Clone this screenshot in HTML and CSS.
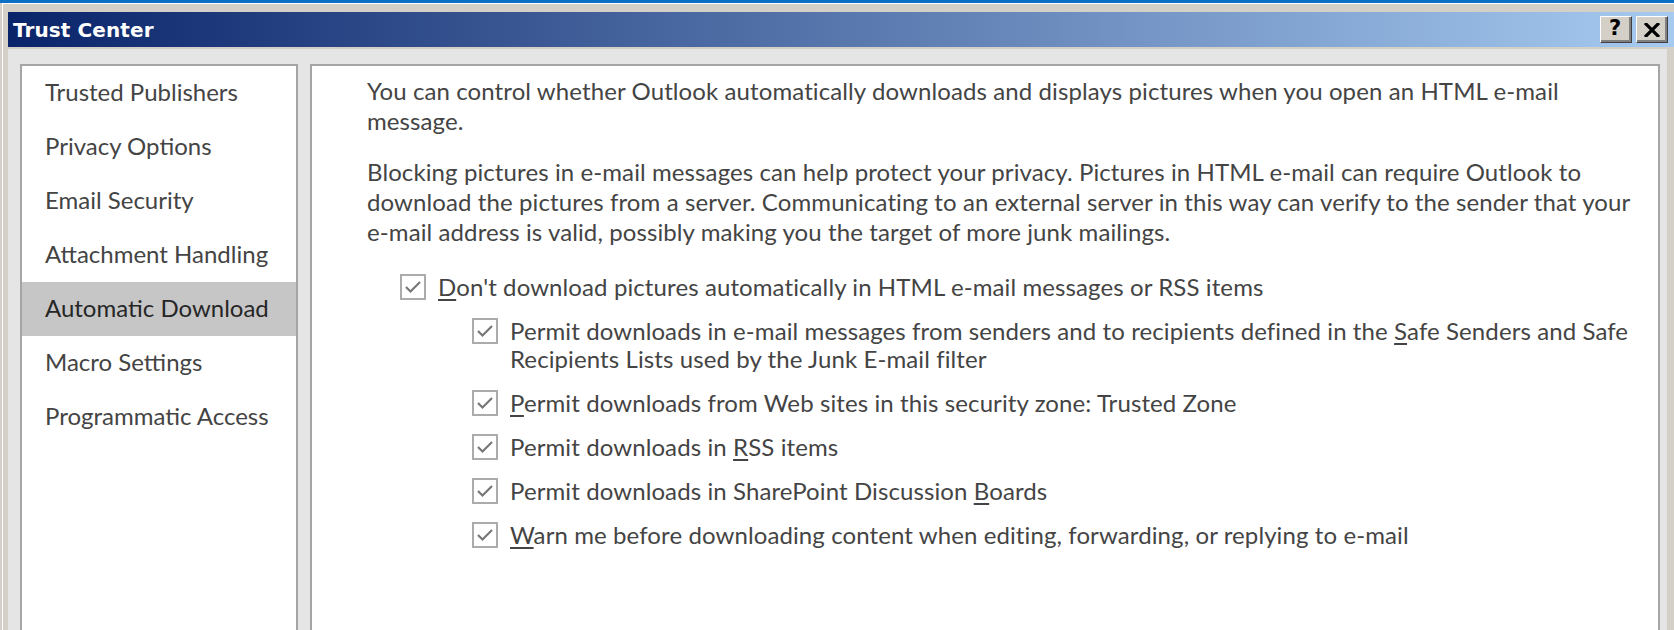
FILE: index.html
```html
<!DOCTYPE html>
<html lang="en">
<head>
    <meta charset="UTF-8">
    <meta name="viewport" content="width=device-width, initial-scale=1.0">
    <title>Trust Center</title>
    <link rel="stylesheet" href="styles.css">
</head>
<body>

    <div class="desktop-strip"></div>

    <div class="window">
        <div class="title-bar">
            <span class="title">Trust Center</span>
            <div class="caption-buttons">
                <button class="caption-btn" type="button" title="Help">
                    <span class="help-glyph">?</span>
                </button>
                <button class="caption-btn" type="button" title="Close">
                    <svg width="16" height="14" viewBox="0 0 16 14">
                        <path d="M1 0 L15 14 M15 0 L1 14" stroke="#000" stroke-width="3.2" fill="none"/>
                    </svg>
                </button>
            </div>
        </div>

        <div class="dialog">
            <ul class="nav">
                <li>Trusted Publishers</li>
                <li>Privacy Options</li>
                <li>Email Security</li>
                <li>Attachment Handling</li>
                <li class="selected">Automatic Download</li>
                <li>Macro Settings</li>
                <li>Programmatic Access</li>
            </ul>

            <div class="content">
                <p>You can control whether Outlook automatically downloads and displays pictures when you open an HTML e-mail message.</p>
                <p class="last">Blocking pictures in e-mail messages can help protect your privacy. Pictures in HTML e-mail can require Outlook to download the pictures from a server. Communicating to an external server in this way can verify to the sender that your e-mail address is valid, possibly making you the target of more junk mailings.</p>

                <div class="option">
                    <span class="checkbox"><svg width="22" height="22" viewBox="0 0 22 22"><path d="M4 11 L8.5 15.5 L18 6" stroke="#777" stroke-width="2.2" fill="none"/></svg></span>
                    <span class="label"><u>D</u>on't download pictures automatically in HTML e-mail messages or RSS items</span>
                </div>
                <div class="option sub">
                    <span class="checkbox"><svg width="22" height="22" viewBox="0 0 22 22"><path d="M4 11 L8.5 15.5 L18 6" stroke="#777" stroke-width="2.2" fill="none"/></svg></span>
                    <span class="label">Permit downloads in e-mail messages from senders and to recipients defined in the <u>S</u>afe Senders and Safe <span>Recipients Lists used by the Junk E-mail filter</span></span>
                </div>
                <div class="option sub">
                    <span class="checkbox"><svg width="22" height="22" viewBox="0 0 22 22"><path d="M4 11 L8.5 15.5 L18 6" stroke="#777" stroke-width="2.2" fill="none"/></svg></span>
                    <span class="label"><u>P</u>ermit downloads from Web sites in this security zone: Trusted Zone</span>
                </div>
                <div class="option sub">
                    <span class="checkbox"><svg width="22" height="22" viewBox="0 0 22 22"><path d="M4 11 L8.5 15.5 L18 6" stroke="#777" stroke-width="2.2" fill="none"/></svg></span>
                    <span class="label">Permit downloads in <u>R</u>SS items</span>
                </div>
                <div class="option sub">
                    <span class="checkbox"><svg width="22" height="22" viewBox="0 0 22 22"><path d="M4 11 L8.5 15.5 L18 6" stroke="#777" stroke-width="2.2" fill="none"/></svg></span>
                    <span class="label">Permit downloads in SharePoint Discussion <u>B</u>oards</span>
                </div>
                <div class="option sub">
                    <span class="checkbox"><svg width="22" height="22" viewBox="0 0 22 22"><path d="M4 11 L8.5 15.5 L18 6" stroke="#777" stroke-width="2.2" fill="none"/></svg></span>
                    <span class="label"><u>W</u>arn me before downloading content when editing, forwarding, or replying to e-mail</span>
                </div>
            </div>
        </div>
    </div>

</body>
</html>
```
FILE: styles.css
```css
body {
    margin: 0;
    background-color: #d4d0c8;
    font-family: Lato, 'Open Sans', sans-serif;
    overflow: hidden;
    height: 630px;
    display: flex;
    flex-direction: column;
}

.desktop-strip {
    height: 3px;
    background-color: #0b70c6;
    flex-shrink: 0;
}

.window {
    flex: 1;
    min-height: 0;
    margin-left: 2px;
    border-top: 1px solid #fff;
    border-left: 1px solid #fff;
    padding: 8px 7px 0 5px;
    display: flex;
    flex-direction: column;
}

/* classic gradient caption */
.title-bar {
    height: 35px;
    flex-shrink: 0;
    margin-right: -7px;
    padding: 0 6px 0 5px;
    display: flex;
    align-items: center;
    justify-content: space-between;
    background: linear-gradient(to right, #0a246a, #a6caf0);
}

.title {
    color: white;
    font-family: 'DejaVu Sans', sans-serif;
    font-weight: bold;
    font-size: 20px;
    letter-spacing: 0.1px;
}

.caption-buttons {
    display: flex;
    gap: 4px;
}

.caption-btn {
    width: 32px;
    height: 27px;
    padding: 0;
    display: flex;
    align-items: center;
    justify-content: center;
    background-color: #d4d0c8;
    border: 1px solid;
    border-color: #fff #404040 #404040 #fff;
    box-shadow: inset -2px -2px #808080;
}

.help-glyph {
    font-family: 'DejaVu Sans', sans-serif;
    font-weight: bold;
    font-size: 21px;
    line-height: 1;
    margin: -2px 2px 0 0;
    color: #000;
}

.dialog {
    flex: 1;
    min-height: 0;
    border-top: 2px solid #d4d0c8;
    background-color: #e5e5e5;
    padding: 15px 7px 0 12px;
    display: flex;
    gap: 12px;
}

.nav {
    list-style: none;
    margin: 0;
    padding: 0;
    width: 278px;
    box-sizing: border-box;
    border: 2px solid #a5a5a5;
    border-bottom: none;
    background-color: #fff;
    flex-shrink: 0;
}

.nav li {
    height: 54px;
    line-height: 52px;
    padding-left: 23px;
    box-sizing: border-box;
    padding-bottom: 2px;
    font-size: 24px;
    color: #444;
    white-space: nowrap;
}

.nav li.selected {
    background-color: #c6c6c6;
    color: #262626;
}

.content {
    flex: 1;
    border: 2px solid #a5a5a5;
    border-bottom: none;
    background-color: #fff;
    padding: 10px 18px 0 55px;
    font-size: 24px;
    letter-spacing: 0.1px;
    color: #444;
}

.content p {
    margin: 0 0 21px;
    line-height: 30px;
}

.content p.last {
    margin-bottom: 26px;
}

.option {
    display: flex;
    gap: 12px;
    margin: 0 0 16px 33px;
    line-height: 28px;
}

.option.sub {
    margin-left: 105px;
}

.checkbox {
    width: 26px;
    height: 26px;
    box-sizing: border-box;
    margin-top: 1px;
    border: 2px solid #ababab;
    background-color: #fff;
    flex-shrink: 0;
}

.checkbox svg {
    display: block;
}

.label u {
    text-underline-offset: 3px;
}
```
